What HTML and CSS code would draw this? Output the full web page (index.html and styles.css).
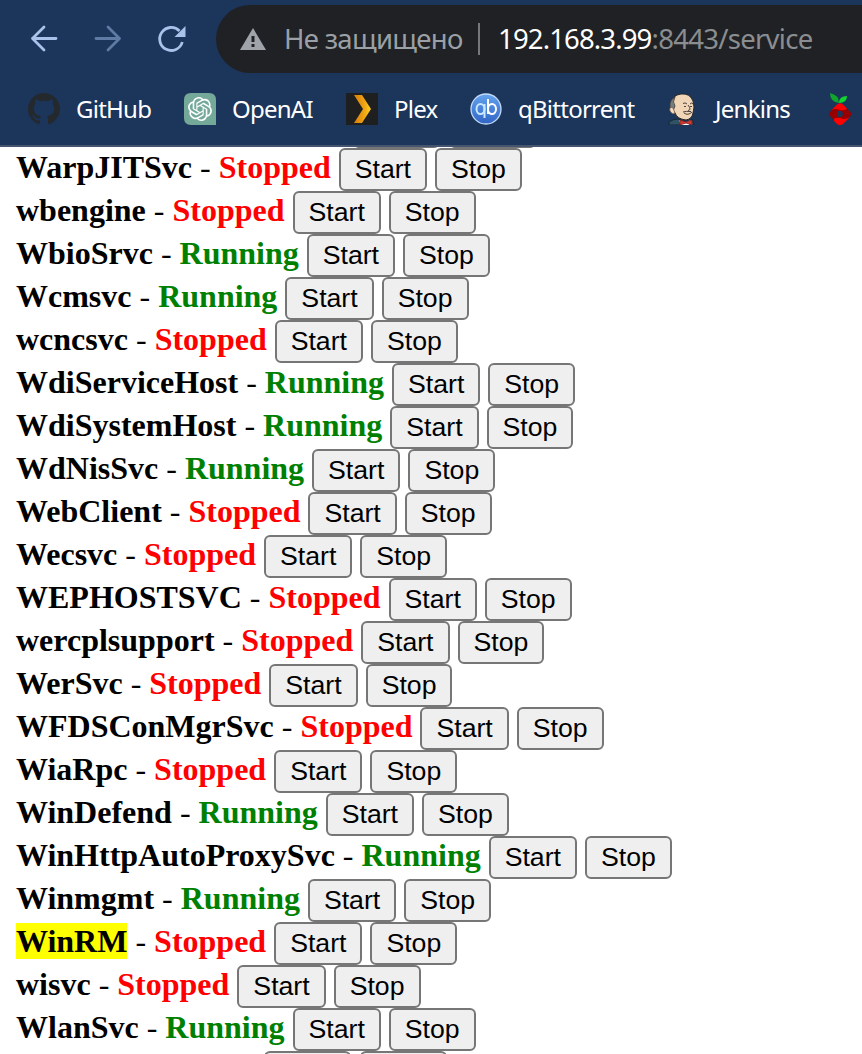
FILE: index.html
```html
<!DOCTYPE html>
<html lang="ru">
<head>
<meta charset="utf-8">
<title>service</title>
<link rel="stylesheet" href="styles.css">
</head>
<body>
<header class="browser">
  <div class="toolbar">
    <svg class="nav" viewBox="0 0 32 32"><path d="M28 15.500H4.500M16 4 4.500 15.500 16 27"/></svg>
    <svg class="nav dim" viewBox="0 0 32 32"><path d="M4 15.500H27.500M16 4 27.500 15.500 16 27"/></svg>
    <svg class="nav reload" viewBox="0 0 32 32"><path d="M26.300 19A11.500 11.500 0 1 1 23.500 8"/><path class="solid" d="M29.500 3V14H18.500Z"/></svg>
    <div class="address">
      <svg class="warn" viewBox="0 0 26 22"><path fill="#a0a4aa" d="M13 0 26 22H0Z"/><path fill="#202124" d="M11.500 8H14.500V14H11.500ZM11.500 16H14.500V19H11.500Z"/></svg>
      <span class="insecure">Не защищено</span>
      <span class="divider"></span>
      <span class="url"><span class="host">192.168.3.99</span><span class="path">:8443/service</span></span>
    </div>
  </div>
  <nav class="bookmarks">
    <a class="bookmark github"><svg viewBox="0 0 16 16"><path fill="#24292e" d="M8 0C3.580 0 0 3.580 0 8c0 3.540 2.290 6.530 5.470 7.590.4.070.55-.17.55-.38 0-.19-.01-.82-.01-1.490-2.010.37-2.530-.49-2.690-.94-.09-.23-.48-.94-.82-1.130-.28-.15-.68-.52-.01-.53.63-.01 1.080.58 1.230.82.72 1.210 1.870.87 2.330.66.07-.52.28-.87.51-1.070-1.780-.2-3.640-.89-3.640-3.950 0-.87.31-1.590.82-2.150-.08-.2-.36-1.020.08-2.120 0 0 .67-.21 2.200.82.64-.18 1.320-.27 2-.27s1.360.09 2 .27c1.530-1.040 2.200-.82 2.200-.82.44 1.100.16 1.920.08 2.120.51.56.82 1.270.82 2.150 0 3.070-1.870 3.750-3.650 3.950.29.25.54.73.54 1.480 0 1.070-.01 1.930-.01 2.200 0 .21.15.46.55.38A8.010 8.010 0 0 0 16 8c0-4.420-3.580-8-8-8Z"/></svg><span>GitHub</span></a>
    <a class="bookmark openai"><svg viewBox="0 0 32 32"><path fill="#74a99a" d="M7 0H25Q32 0 32 7V32H7Q0 32 0 25V7Q0 0 7 0Z"/><g transform="translate(4 4)"><path fill="#fff" d="M22.282 9.821a5.985 5.985 0 0 0-.516-4.910 6.046 6.046 0 0 0-6.510-2.900A6.065 6.065 0 0 0 4.981 4.182a5.985 5.985 0 0 0-3.998 2.900 6.046 6.046 0 0 0 .743 7.097 5.980 5.980 0 0 0 .511 4.911 6.051 6.051 0 0 0 6.515 2.900A5.985 5.985 0 0 0 13.260 24a6.056 6.056 0 0 0 5.772-4.206 5.990 5.990 0 0 0 3.998-2.900 6.056 6.056 0 0 0-.748-7.073zM13.260 22.430a4.476 4.476 0 0 1-2.876-1.040l.141-.081 4.779-2.758a.795.795 0 0 0 .393-.681v-6.737l2.020 1.169a.071.071 0 0 1 .038.052v5.583a4.504 4.504 0 0 1-4.495 4.493zM3.600 18.304a4.470 4.470 0 0 1-.535-3.014l.142.085 4.783 2.759a.771.771 0 0 0 .780 0l5.843-3.369v2.332a.08.08 0 0 1-.033.062L9.740 19.950a4.500 4.500 0 0 1-6.140-1.646zM2.340 7.896a4.485 4.485 0 0 1 2.366-1.973V11.600a.766.766 0 0 0 .388.676l5.815 3.355-2.020 1.168a.076.076 0 0 1-.071 0l-4.830-2.786A4.504 4.504 0 0 1 2.340 7.872zm16.597 3.855-5.833-3.387L15.119 7.200a.076.076 0 0 1 .071 0l4.830 2.791a4.494 4.494 0 0 1-.676 8.105v-5.678a.79.79 0 0 0-.407-.667zm2.010-3.023-.141-.085-4.774-2.782a.776.776 0 0 0-.785 0L9.409 9.230V6.897a.066.066 0 0 1 .028-.061l4.830-2.787a4.500 4.500 0 0 1 6.680 4.660zm-12.640 4.135-2.020-1.164a.08.08 0 0 1-.038-.057V6.075a4.500 4.500 0 0 1 7.375-3.453l-.142.080L8.704 5.460a.795.795 0 0 0-.393.681zm1.097-2.365 2.602-1.500 2.607 1.500v2.999l-2.597 1.500-2.607-1.500z"/></g></svg><span>OpenAI</span></a>
    <a class="bookmark plex"><svg viewBox="0 0 32 32"><defs><linearGradient id="plexGold"><stop offset="0" stop-color="#d77c0b"/><stop offset=".6" stop-color="#efa414"/><stop offset="1" stop-color="#ffd21f"/></linearGradient></defs><path fill="#1f1f1f" d="M0 0H32V32H0Z"/><path fill="url(#plexGold)" d="M8 2H16L25 16 16 30H8L17 16Z"/></svg><span>Plex</span></a>
    <a class="bookmark qbit"><svg viewBox="0 0 32 32"><defs><linearGradient id="qbBlue" x2="0" y2="1"><stop offset="0" stop-color="#65a3ee"/><stop offset="1" stop-color="#2f65c5"/></linearGradient></defs><circle cx="16" cy="16" r="15" fill="url(#qbBlue)" stroke="#c6dcfa" stroke-width="1.300"/><g fill="none" stroke-width="2"><ellipse cx="10.500" cy="16" rx="4" ry="5" stroke="#c8e8ff"/><path stroke="#c8e8ff" d="M14.500 11V25"/><path stroke="#fff" d="M18 6V21"/><ellipse cx="22" cy="16" rx="4" ry="5" stroke="#fff"/></g></svg><span>qBittorrent</span></a>
    <a class="bookmark jenkins"><svg viewBox="0 0 32 32"><path fill="#315366" stroke="#172733" d="M2 32V29Q6 26 11 26L20 30 25 26 27 32Z"/><path fill="#f0d6b7" stroke="#282626" stroke-width="1" d="M6 17Q3 17 4 11 5 2 14 1 23 0 26 8 28 14 26 20 25 26 19 27 10 26 8 20Z"/><path fill="#777b7c" stroke="#343434" stroke-width=".8" d="M8 4Q2 7 3 14L6 18 8 13Q5 9 8 4Z"/><path fill="#f5dcc2" stroke="#765f50" stroke-width=".8" d="M6 15Q2 13 3 18 5 22 8 20Z"/><path fill="none" stroke="#4c423b" stroke-width="1" d="M16 10.500Q18 9 20 11M23 11Q25 9 26 11M17 13.500H19M23 13.500H25M21 12Q25 17 21 17.500M17 20Q21 23 25 19M16 19Q19 18 24 18.500"/><path fill="#fff" d="M12 27 17 30 24 27 22 32H14Z"/><path fill="#d33833" stroke="#79221f" stroke-width=".8" d="M13 27 19 29 25 27V32L19 30 13 32Z"/></svg><span>Jenkins</span></a>
    <a class="bookmark pihole"><svg viewBox="0 0 32 32"><path fill="#10a62c" d="M14 10Q5 9 5 0 14 2 14 10Z"/><path fill="#12d52f" d="M14 10Q14 3 22 3 22 10 14 10Z"/><path fill="#960000" d="M9 15H21L25.500 19Q27 21 25.500 23L21 27H9L5 23Q3 21 5 19Z"/><path fill="#f00" d="M6 17.500 12 11.500Q15 9 18 11.500L22 15.500Q20 18 15 17 10 15 6 17.500ZM9 26Q10 24 15 25 20 27 24.500 24.500L18 31Q15 33.500 12 31L9 28Z"/><path fill="#1b355b" d="M13 18H17L18 21 17 24H13L12 21Z"/></svg></a>
  </nav>
</header>
<main class="services">
  <div class="row edge first"><button></button><button></button></div>
  <div class="row"><b>WarpJITSvc</b> - <b class="stopped">Stopped</b> <button>Start</button> <button>Stop</button></div>
  <div class="row"><b>wbengine</b> - <b class="stopped">Stopped</b> <button>Start</button> <button>Stop</button></div>
  <div class="row"><b>WbioSrvc</b> - <b class="running">Running</b> <button>Start</button> <button>Stop</button></div>
  <div class="row"><b>Wcmsvc</b> - <b class="running">Running</b> <button>Start</button> <button>Stop</button></div>
  <div class="row"><b>wcncsvc</b> - <b class="stopped">Stopped</b> <button>Start</button> <button>Stop</button></div>
  <div class="row"><b>WdiServiceHost</b> - <b class="running">Running</b> <button>Start</button> <button>Stop</button></div>
  <div class="row"><b>WdiSystemHost</b> - <b class="running">Running</b> <button>Start</button> <button>Stop</button></div>
  <div class="row"><b>WdNisSvc</b> - <b class="running">Running</b> <button>Start</button> <button>Stop</button></div>
  <div class="row"><b>WebClient</b> - <b class="stopped">Stopped</b> <button>Start</button> <button>Stop</button></div>
  <div class="row"><b>Wecsvc</b> - <b class="stopped">Stopped</b> <button>Start</button> <button>Stop</button></div>
  <div class="row"><b>WEPHOSTSVC</b> - <b class="stopped">Stopped</b> <button>Start</button> <button>Stop</button></div>
  <div class="row"><b>wercplsupport</b> - <b class="stopped">Stopped</b> <button>Start</button> <button>Stop</button></div>
  <div class="row"><b>WerSvc</b> - <b class="stopped">Stopped</b> <button>Start</button> <button>Stop</button></div>
  <div class="row"><b>WFDSConMgrSvc</b> - <b class="stopped">Stopped</b> <button>Start</button> <button>Stop</button></div>
  <div class="row"><b>WiaRpc</b> - <b class="stopped">Stopped</b> <button>Start</button> <button>Stop</button></div>
  <div class="row"><b>WinDefend</b> - <b class="running">Running</b> <button>Start</button> <button>Stop</button></div>
  <div class="row"><b>WinHttpAutoProxySvc</b> - <b class="running">Running</b> <button>Start</button> <button>Stop</button></div>
  <div class="row"><b>Winmgmt</b> - <b class="running">Running</b> <button>Start</button> <button>Stop</button></div>
  <div class="row"><b class="found">WinRM</b> - <b class="stopped">Stopped</b> <button>Start</button> <button>Stop</button></div>
  <div class="row"><b>wisvc</b> - <b class="stopped">Stopped</b> <button>Start</button> <button>Stop</button></div>
  <div class="row"><b>WlanSvc</b> - <b class="running">Running</b> <button>Start</button> <button>Stop</button></div>
  <div class="row edge last"><button></button><button></button></div>
</main>
</body>
</html>
```
FILE: styles.css
```css
* { box-sizing: border-box; }
body { margin: 0; height: 1054px; overflow: hidden; background: #fff; }
.browser {
  height: 147px; background: #1b355b; border-bottom: 2px solid #46546f;
  font-family: "Segoe UI", "Noto Sans", sans-serif; overflow: hidden;
}
.toolbar { display: flex; align-items: center; padding: 5px 0 0 28px; height: 73px; }
.nav {
  width: 32px; height: 32px; margin-right: 32px; flex: none;
  fill: none; stroke: #a9c2ea; stroke-width: 2.8; stroke-linecap: round; stroke-linejoin: round;
}
.dim { stroke: #607ba3; }
.reload { margin-right: 28px; stroke-linecap: butt; }
.solid { fill: #a9c2ea; stroke: none; }
.address {
  flex: 1; height: 68px; display: flex; align-items: center;
  padding-left: 24px; background: #202124; border-radius: 34px 0 0 34px;
  font-size: 27.5px; white-space: nowrap;
}
.warn { width: 26px; height: 22px; flex: none; }
.insecure { width: 178px; margin-left: 18px; padding-bottom: 2px; color: #9aa0a6; letter-spacing: -.7px; }
.divider { width: 2px; height: 32px; margin: 0 18px 0 16px; background: #74777b; }
.url { padding-bottom: 2px; }
.host { color: #fff; letter-spacing: -.85px; }
.path { color: #8b8e91; letter-spacing: -.72px; }
.bookmarks { display: flex; height: 72px; padding-left: 28px; }
.bookmark {
  display: flex; align-items: center; gap: 16px; flex: none;
  font-size: 24px; letter-spacing: -.75px; color: #fff; white-space: nowrap;
}
.bookmark span { padding-bottom: 2px; }
.bookmark svg { width: 32px; height: 32px; flex: none; }
.github { width: 156px; }
.openai { width: 162px; }
.plex { width: 124px; }
.qbit { width: 197px; }
.jenkins { width: 158px; }
.services {
  height: 907px; overflow: hidden; padding-left: 16px;
  font: 32px/37px "Liberation Serif", serif; color: #000;
}
.row { height: 43px; white-space: nowrap; line-height: 43px; }
.row b { line-height: 37px; }
.row button {
  height: 43px; padding: 0 14px; margin: 0; border: 2px solid #767676; border-radius: 6px;
  background: #efefef; color: #000; font: 26.667px/36px "Liberation Sans", sans-serif;
  vertical-align: baseline;
}
.stopped { color: #f00; }
.running { color: #008000; }
.found { background: #ff0; }
.edge { display: flex; gap: 9px; }
.edge button { width: 87px; flex: none; }
.first { height: 41px; margin-top: -42px; padding-left: 337px; }
.last { padding: 2px 0 0 248px; }
```
